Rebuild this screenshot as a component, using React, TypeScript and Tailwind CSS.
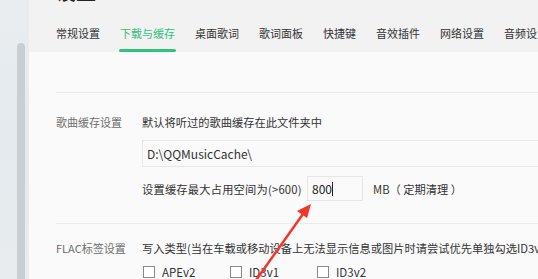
const tabs = ["常规设置", "下载与缓存", "桌面歌词", "歌词面板", "快捷键", "音效插件", "网络设置", "音频设置"];

const Checkbox = ({ label }: { label: string }) => (
  <div className="flex items-center gap-[7px] w-[87px]">
    <div className="w-[12px] h-[12px] border border-[#8a8a8a] bg-white shrink-0"></div>
    <span className="text-[11.5px] leading-[16px] text-[#333]">{label}</span>
  </div>
);

export default function App() {
  return (
    <div
      className="relative flex w-[538px] h-[279px] overflow-hidden bg-[#fafafa]"
      style={{ fontFamily: '"Noto Sans CJK SC", "Noto Sans", sans-serif' }}
    >
      {/* left strip with scrollbar */}
      <div className="w-[29px] shrink-0 bg-gradient-to-b from-[#e9edf0] via-[#e4eaee] to-[#e8ecee] flex justify-end pr-[4px]">
        <div className="w-[8px] mt-[43px] bg-[#c9ced2] rounded-t-full"></div>
      </div>

      <div className="flex-1 flex flex-col min-w-0">
        {/* header */}
        <div className="bg-[#f2f2f2] h-[52px] pl-[27px] flex flex-col shrink-0">
          <div className="h-[6px] overflow-hidden">
            <div className="-mt-[22px] text-[20px] leading-[28px] font-bold text-[#222]">设置</div>
          </div>
          <div className="flex gap-[20px] mt-[19px] whitespace-nowrap">
            {tabs.map((t, i) => (
              <div key={t} className="flex flex-col">
                <span
                  className={
                    i === 1
                      ? "text-[11px] leading-[16px] text-[#31c27c]"
                      : "text-[11px] leading-[16px] text-[#333]"
                  }
                >
                  {t}
                </span>
                {i === 1 && <div className="mt-[8px] -mx-[1px] h-[3px] bg-[#31c27c] rounded-full"></div>}
              </div>
            ))}
          </div>
        </div>

        {/* content */}
        <div className="pl-[27px] flex flex-col">
          <div className="mt-[40px] border-t border-[#ececec]"></div>

          <div className="flex mt-[21px]">
            <div className="w-[86px] shrink-0 text-[11px] leading-[16px] text-[#6f6f6f]">歌曲缓存设置</div>
            <div className="flex-1 flex flex-col">
              <div className="text-[11.25px] leading-[16px] text-[#333]">默认将听过的歌曲缓存在此文件夹中</div>
              <div className="mt-[10px] h-[27px] border border-r-0 border-[#e8e8e8] bg-[#fafafa] flex items-center pl-[4px] text-[12px] text-[#333]">
                D:\QQMusicCache\
              </div>
              <div className="mt-[9px] flex items-center">
                <span className="text-[11.25px] leading-[16px] text-[#333] w-[165px] tracking-[0.2px]">设置缓存最大占用空间为(&gt;600)</span>
                <div className="w-[56px] h-[25px] border border-[#e6e6e6] bg-[#fafafa] flex items-center pl-[4px] text-[12px] text-[#222]">
                  800<span className="w-[1px] h-[14px] bg-[#222]"></span>
                </div>
                <span className="ml-[10px] text-[11.25px] leading-[16px] text-[#333]">MB（ 定期清理 ）</span>
              </div>
            </div>
          </div>

          <div className="mt-[22px] border-t border-[#ececec]"></div>

          <div className="flex mt-[16px]">
            <div className="w-[86px] shrink-0 text-[11px] leading-[16px] text-[#6f6f6f]">FLAC标签设置</div>
            <div className="flex-1 flex flex-col min-w-0">
              <div className="text-[11.25px] leading-[16px] text-[#333] whitespace-nowrap">
                写入类型(当在车载或移动设备上无法显示信息或图片时请尝试优先单独勾选ID3v2)
              </div>
              <div className="mt-[8px] flex pl-[1px]">
                <Checkbox label="APEv2" />
                <Checkbox label="ID3v1" />
                <Checkbox label="ID3v2" />
              </div>
            </div>
          </div>
        </div>
      </div>

      {/* red annotation arrow */}
      <svg className="absolute left-0 top-0 pointer-events-none" width="538" height="279" viewBox="0 0 538 279">
        <line x1="254" y1="283" x2="303" y2="214" stroke="#f2362a" strokeWidth="2.5" strokeLinecap="round" />
        <polygon points="311,204 297,211 307,218" fill="#f2362a" />
      </svg>
    </div>
  );
}
